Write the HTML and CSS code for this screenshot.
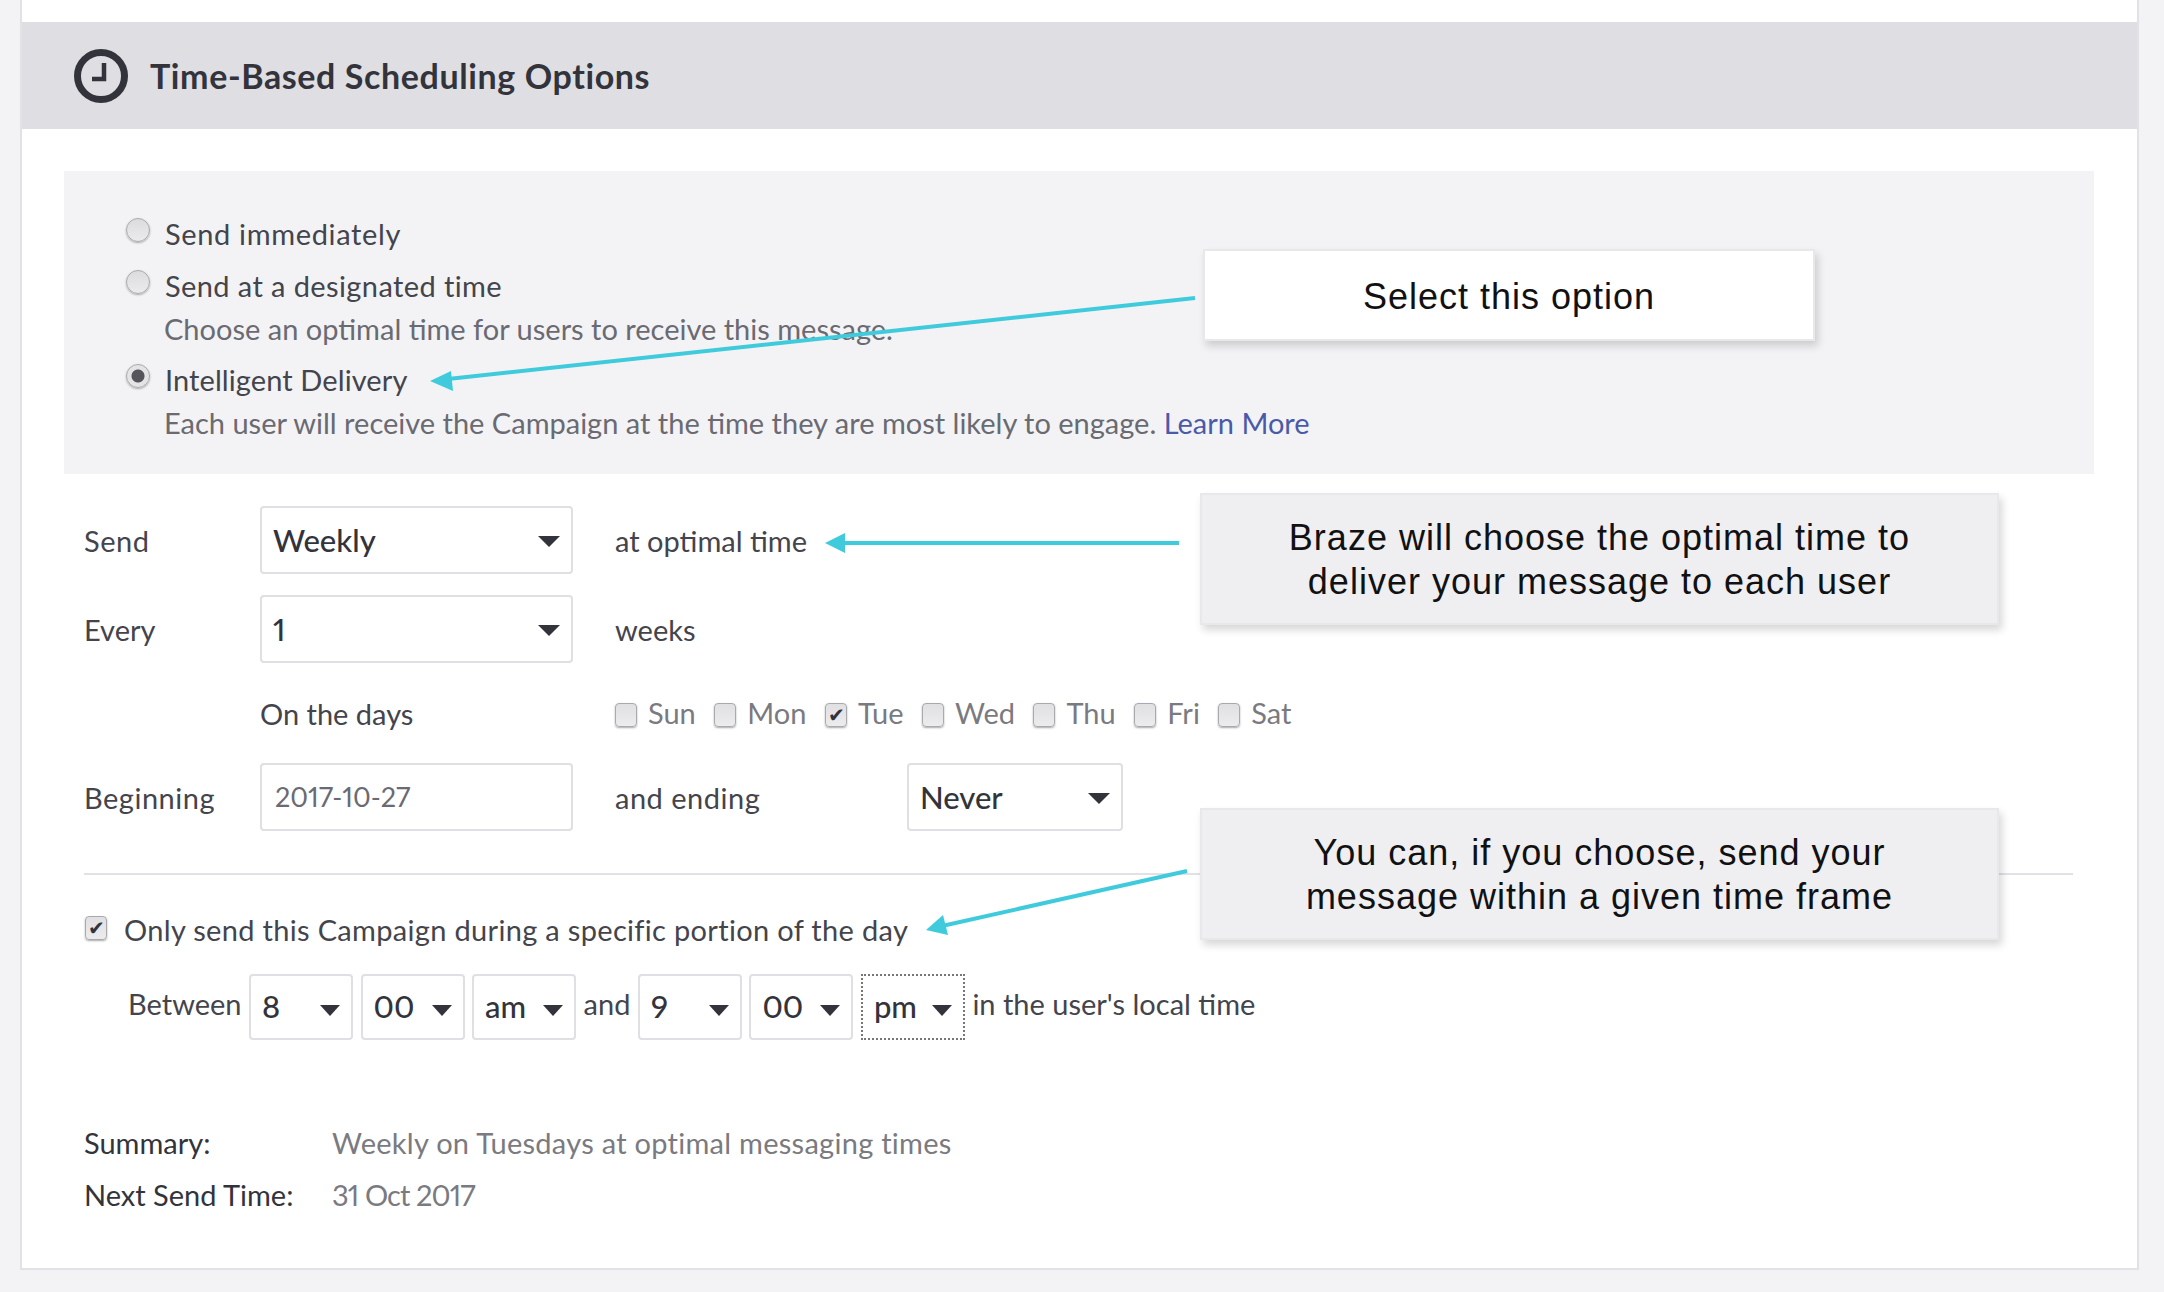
FILE: index.html
```html
<!DOCTYPE html>
<html lang="en">
  <head>
    <meta charset="UTF-8" />
    <title>Time-Based Scheduling Options</title>
    <link rel="stylesheet" href="styles.css">
  </head>
  <body>
    <div class="page">
      <div class="card">
        <header class="card-head">
          <svg class="clock" width="54" height="54" viewBox="0 0 54 54">
            <circle cx="27" cy="27" r="23.5" fill="none" stroke="#33333b" stroke-width="7" />
            <path d="M30 14V30H18" fill="none" stroke="#33333b" stroke-width="4.5" />
          </svg>
          <h1>Time-Based Scheduling Options</h1>
        </header>

        <div class="panel">
          <div class="option wide"><span class="radio"></span>Send immediately</div>
          <div class="option"><span class="radio"></span>Send at a designated time</div>
          <div class="hint">Choose an optimal time for users to receive this message.</div>
          <div class="option tight"><span class="radio on"></span>Intelligent Delivery</div>
          <div class="hint">Each user will receive the Campaign at the time they are most likely to engage. <a href="#">Learn More</a></div>
        </div>

        <div class="form">
          <div class="row first">
            <span class="spaced">Send</span>
            <div class="select">Weekly</div>
            <span>at optimal time</span>
          </div>
          <div class="row">
            <span>Every</span>
            <div class="select">1</div>
            <span>weeks</span>
          </div>
          <div class="row days-row">
            <span></span>
            <span>On the days</span>
            <div class="days">
              <label class="day"><span class="box"></span>Sun</label>
              <label class="day"><span class="box"></span>Mon</label>
              <label class="day"><span class="box checked"></span>Tue</label>
              <label class="day"><span class="box"></span>Wed</label>
              <label class="day"><span class="box"></span>Thu</label>
              <label class="day"><span class="box"></span>Fri</label>
              <label class="day"><span class="box"></span>Sat</label>
            </div>
          </div>
          <div class="row">
            <span class="spaced">Beginning</span>
            <div class="date">2017-10-27</div>
            <div class="ending">
              <span class="ending-label spaced">and ending</span>
              <div class="select never">Never</div>
            </div>
          </div>

          <hr class="rule" />

          <div class="only">
            <span class="box checked"></span>Only send this Campaign during a specific portion of the day
          </div>
          <div class="between">
            <span>Between</span>
            <div class="select small">8</div>
            <div class="select small">00</div>
            <div class="select small">am</div>
            <span>and</span>
            <div class="select small">9</div>
            <div class="select small">00</div>
            <div class="select small focus">pm</div>
            <span>in the user's local time</span>
          </div>

          <div class="summary">
            <span class="summary-label">Summary:</span>
            <span class="summary-value">Weekly on Tuesdays at optimal messaging times</span>
            <span class="summary-label">Next Send Time:</span>
            <span class="summary-value next-date">31 Oct 2017</span>
          </div>
        </div>
      </div>

      <!-- arrows and callouts sit on top of the form -->
      <svg class="arrows" width="2164" height="1292" viewBox="0 0 2164 1292">
        <path d="M1195 298L448 379" stroke="#40cbdd" stroke-width="4" fill="none" />
        <path d="M430 381L451 371L453 391Z" fill="#40cbdd" />
        <path d="M1179 543H842" stroke="#40cbdd" stroke-width="4" fill="none" />
        <path d="M825 543L845 533V553Z" fill="#40cbdd" />
        <path d="M1187 871L942 926" stroke="#40cbdd" stroke-width="4" fill="none" />
        <path d="M926 930L943 915L948 935Z" fill="#40cbdd" />
      </svg>
      <div class="callout white one">Select this option</div>
      <div class="callout two">Braze will choose the optimal time to<br />deliver your message to each user</div>
      <div class="callout three">You can, if you choose, send your<br />message within a given time frame</div>
    </div>
  </body>
</html>
```

FILE: styles.css
```css
body {
  margin: 0;
  background-color: #f3f3f5;
  font-family: Lato, "Open Sans", sans-serif;
  font-size: 29px;
  font-variant-numeric: proportional-nums;
  color: #44444c;
}

.page {
  position: relative;
  width: 2164px;
  height: 1292px;
  overflow: hidden;
}

.spaced {
  letter-spacing: 0.5px;
}

.card {
  box-sizing: border-box;
  width: 2119px;
  height: 1270px;
  margin-left: 20px;
  padding-top: 22px;
  background-color: white;
  border: 2px solid #e1e1e6;
  border-top: none;
}

.card-head {
  display: flex;
  align-items: center;
  gap: 22px;
  height: 107px;
  padding-left: 52px;
  background-color: #dedee3;
}

.card-head h1 {
  margin: 0;
  font-size: 34px;
  font-weight: 700;
  letter-spacing: 0.6px;
  color: #33333b;
}

.panel {
  margin: 42px 43px 0 42px;
  padding: 38px 0 25px 62px;
  background-color: #f3f3f5;
}

.option {
  box-sizing: border-box;
  display: flex;
  align-items: center;
  gap: 15px;
  height: 52px;
  padding-bottom: 4px;
  letter-spacing: 0.4px;
}

.option.wide {
  letter-spacing: 0.65px;
}

.option.tight {
  letter-spacing: 0.1px;
}

.hint {
  height: 42px;
  padding-left: 38px;
  line-height: 32px;
  color: #6a6a72;
}

.panel a {
  color: #4a5aa8;
  text-decoration: none;
}

.radio {
  box-sizing: border-box;
  width: 24px;
  height: 24px;
  margin-top: -6px;
  border: 1px solid #aaaaae;
  border-radius: 50%;
  background: linear-gradient(#dcdcdf, #ebebed);
  box-shadow: 0 1px 2px #aaa;
}

.radio.on {
  background: radial-gradient(circle, #55555c 0 6px, #e4e4e6 7px);
}

.form {
  padding-left: 62px;
}

.row {
  display: grid;
  grid-template-columns: 176px 355px 1fr;
  align-items: center;
  height: 68px;
  margin-top: 21px;
}

.row.first {
  margin-top: 32px;
}

.row.days-row {
  height: 58px;
}

.select,
.date {
  box-sizing: border-box;
  position: relative;
  width: 313px;
  height: 68px;
  padding-left: 11px;
  line-height: 64px;
  background-color: white;
  border: 2px solid #dfdfe4;
  border-radius: 4px;
  color: #33333b;
}

.select {
  font-size: 31px;
  font-weight: 500;
}

.select::after {
  content: "";
  position: absolute;
  top: 28px;
  right: 11px;
  border-left: 11px solid transparent;
  border-right: 11px solid transparent;
  border-top: 11px solid #33333b;
}

.date {
  padding-left: 13px;
  font-size: 27px;
  color: #6a6a72;
}

.ending {
  display: flex;
  align-items: center;
}

.ending-label {
  width: 292px;
}

.select.never {
  width: 216px;
}

.days {
  display: flex;
  gap: 18.5px;
  color: #7a7a80;
}

.day {
  display: flex;
  align-items: center;
  gap: 11px;
  line-height: 30px;
}

.box {
  position: relative;
  box-sizing: border-box;
  flex: none;
  width: 22px;
  height: 24px;
  margin-top: 3px;
  border: 1px solid #aaaaae;
  border-radius: 4px;
  background: linear-gradient(#e0e0e3, #ececee);
  box-shadow: 0 1px 2px #aaa;
}

.box.checked::after {
  content: "\2714";
  position: absolute;
  left: 2px;
  top: 0;
  font-family: "DejaVu Sans", sans-serif;
  font-size: 20px;
  line-height: 22px;
  color: #33333b;
}

.rule {
  height: 2px;
  margin: 42px 64px 0 0;
  background-color: #e1e1e6;
  border: none;
}

.only {
  display: flex;
  align-items: center;
  gap: 17px;
  height: 40px;
  margin-top: 34px;
  padding-left: 1px;
  letter-spacing: 0.32px;
}

.only .box {
  margin-top: -2px;
}

.between {
  display: flex;
  align-items: center;
  gap: 7.5px;
  margin-top: 25px;
  padding-left: 44px;
}

.between > span {
  margin-bottom: 8px;
}

.select.small {
  width: 104px;
  height: 66px;
  line-height: 60px;
}

.select.small::after {
  right: 11px;
  top: 29px;
  border-left-width: 10px;
  border-right-width: 10px;
}

.select.focus {
  border: 2px dotted #777;
  border-radius: 0;
}

.summary {
  display: grid;
  grid-template-columns: 248px 1fr;
  grid-auto-rows: 52px;
  align-items: center;
  margin-top: 76px;
}

.summary-label {
  color: #33333b;
}

.summary-value {
  letter-spacing: 0.27px;
  color: #7a7a80;
}

.summary-value.next-date {
  letter-spacing: -0.9px;
}

.arrows {
  position: absolute;
  top: 0;
  left: 0;
}

.callout {
  position: absolute;
  box-sizing: border-box;
  display: flex;
  align-items: center;
  justify-content: center;
  left: 1200px;
  width: 799px;
  height: 132px;
  padding-top: 2px;
  text-align: center;
  font-family: "Liberation Sans", Arial, sans-serif;
  font-size: 36px;
  letter-spacing: 1px;
  line-height: 44px;
  color: #111;
  background-color: #efeff1;
  border: 2px solid #e8e8ea;
  box-shadow: 3px 5px 8px rgba(0, 0, 0, 0.16);
}

.callout.white {
  background-color: white;
}

.callout.one {
  top: 249px;
  left: 1203px;
  width: 612px;
  height: 92px;
  padding-top: 3px;
}

.callout.two {
  top: 493px;
}

.callout.three {
  top: 808px;
}
```
